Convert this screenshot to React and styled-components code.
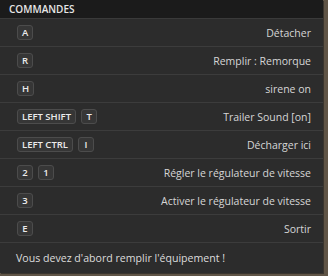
import React from "react";
import styled, { createGlobalStyle } from "styled-components";

const Global = createGlobalStyle`
  html, body { margin: 0; padding: 0; }
  body {
    background: #5f5446;
    width: 328px;
    height: 276px;
    overflow: hidden;
    font-family: "Open Sans", "Noto Sans", sans-serif;
  }
`;

const Panel = styled.div`
  width: 323px;
  height: 273px;
  background: #2c2c2c;
  display: flex;
  flex-direction: column;
  box-shadow: 1px 1px 0 #3a352e;
`;

const Header = styled.div`
  height: 19px;
  background: #1b1b1b;
  color: #e6e6e6;
  font-size: 10px;
  font-weight: 600;
  display: flex;
  align-items: center;
  padding-left: 9px;
  border-bottom: 1px solid #3a3a3a;
  box-sizing: border-box;
`;

const Row = styled.div`
  height: 28px;
  box-sizing: border-box;
  border-bottom: 1px solid #3c3c3c;
  display: flex;
  align-items: center;
  justify-content: space-between;
  padding: 0 12px 0 17px;
`;

const Keys = styled.div`
  display: flex;
  gap: 5px;
`;

const Key = styled.span`
  min-width: 16px;
  height: 15px;
  padding: 0 4px;
  box-sizing: border-box;
  border: 1px solid #4c4c4c;
  border-radius: 3px;
  background: #363636;
  color: #ececec;
  font-size: 9.5px;
  font-weight: 600;
  display: inline-flex;
  align-items: center;
  justify-content: center;
`;

const Label = styled.span`
  color: #d6d6d6;
  font-size: 10.5px;
`;

const Footer = styled.div`
  flex: 1;
  display: flex;
  align-items: center;
  padding-left: 16px;
  color: #dcdcdc;
  font-size: 10.6px;
`;

const rows = [
  [["A"], "Détacher"],
  [["R"], "Remplir : Remorque"],
  [["H"], "sirene on"],
  [["LEFT SHIFT", "T"], "Trailer Sound [on]"],
  [["LEFT CTRL", "I"], "Décharger ici"],
  [["2", "1"], "Régler le régulateur de vitesse"],
  [["3"], "Activer le régulateur de vitesse"],
  [["E"], "Sortir"],
];

export default function App() {
  return (
    <>
      <Global />
      <Panel>
        <Header>COMMANDES</Header>
        {rows.map(([keys, label], i) => (
          <Row key={i}>
            <Keys>
              {keys.map((k) => (
                <Key key={k}>{k}</Key>
              ))}
            </Keys>
            <Label>{label}</Label>
          </Row>
        ))}
        <Footer>Vous devez d'abord remplir l'équipement !</Footer>
      </Panel>
    </>
  );
}
